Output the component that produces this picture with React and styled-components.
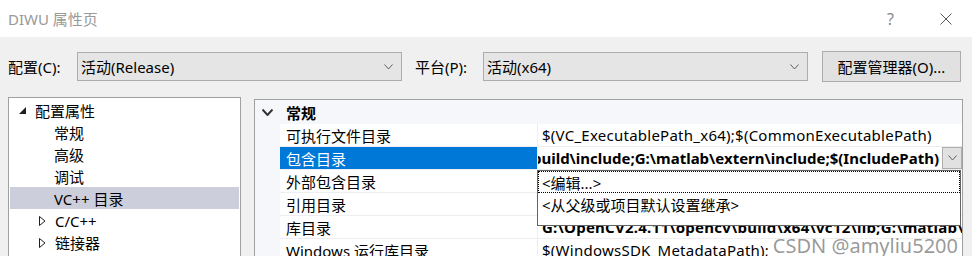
import styled, { createGlobalStyle } from 'styled-components';

const GlobalStyle = createGlobalStyle`
  html, body {
    margin: 0;
    padding: 0;
    background: #f0f0f0;
  }
  body {
    font-family: 'Noto Sans', 'Noto Sans CJK SC', sans-serif;
    font-size: 15px;
    color: #000;
  }
`;

const Window = styled.div`
  width: 972px;
  height: 256px;
  overflow: hidden;
  display: flex;
  flex-direction: column;
  background: #f0f0f0;
`;

const TitleBar = styled.div`
  height: 37px;
  flex: none;
  background: #fff;
  display: flex;
  align-items: center;
  padding-left: 8px;
  color: #999;
`;

const Title = styled.div`
  flex: 1;
`;

const Help = styled.div`
  width: 20px;
  margin-right: 33px;
  color: #8a8a8a;
  font-size: 16px;
`;

const CloseBtn = styled.div`
  width: 12px;
  margin-right: 20px;
  display: flex;
`;

const Body = styled.div`
  flex: 1;
  padding: 14px 0 0 8px;
  display: flex;
  flex-direction: column;
`;

const ConfigRow = styled.div`
  display: flex;
  align-items: center;
  height: 31px;
`;

const Label = styled.div`
  width: ${(p) => p.$w}px;
  margin-left: ${(p) => p.$ml || 0}px;
  flex: none;
`;

const Combo = styled.div`
  width: 325px;
  height: 29px;
  box-sizing: border-box;
  border: 1px solid #adadad;
  background: #e5e5e5;
  display: flex;
  align-items: center;
  padding: 0 8px 0 3px;
`;

const ComboText = styled.div`
  flex: 1;
`;

const Button = styled.div`
  margin-left: 14px;
  width: 139px;
  height: 31px;
  box-sizing: border-box;
  border: 1px solid #adadad;
  background: #e1e1e1;
  display: flex;
  align-items: center;
  justify-content: center;
`;

const Main = styled.div`
  display: flex;
  margin-top: 15px;
  flex: 1;
`;

const Tree = styled.div`
  width: 233px;
  box-sizing: border-box;
  border: 1px solid #a0a0a0;
  border-bottom: none;
  background: #fff;
  padding: 1px 1px 0;
`;

const TreeRow = styled.div`
  height: 22px;
  display: flex;
  align-items: center;
  padding-top: 1px;
  box-sizing: border-box;
  padding-left: ${(p) => p.$indent}px;
  background: ${(p) => (p.$selected ? '#cccedb' : 'transparent')};
`;

const TreeIcon = styled.span`
  display: flex;
  width: 7px;
  margin-right: 9px;
`;

const Grid = styled.div`
  position: relative;
  margin: 2px 0 0 13px;
  width: 709px;
  box-sizing: border-box;
  border: 1px solid #a0a0a0;
  border-bottom: none;
  background: #fff;
`;

const Category = styled.div`
  height: 24px;
  display: flex;
  align-items: center;
  background: #f5f7fa;
  font-weight: 700;
`;

const CatChevron = styled.span`
  display: flex;
  width: 25px;
  padding-left: 7px;
  box-sizing: border-box;
`;

const CatName = styled.span`
  padding-left: 6px;
`;

const PropRow = styled.div`
  display: grid;
  grid-template-columns: 25px 258px 1fr;
  height: 23px;
`;

const Gutter = styled.div`
  background: #f5f7fa;
`;

const NameCell = styled.div`
  display: flex;
  align-items: center;
  padding-left: 6px;
  border-bottom: 1px solid #eceef2;
  border-right: 1px solid #eceef2;
  background: ${(p) => (p.$selected ? '#0078d7' : '#fff')};
  color: ${(p) => (p.$selected ? '#fff' : '#000')};
  white-space: nowrap;
`;

const ValueCell = styled.div`
  display: flex;
  align-items: center;
  padding-left: 4px;
  border-bottom: 1px solid #eceef2;
  font-weight: ${(p) => (p.$bold ? 700 : 400)};
  letter-spacing: 0.25px;
  white-space: nowrap;
  overflow: hidden;
`;

const EditCell = styled.div`
  display: flex;
  align-items: center;
  overflow: hidden;
  border-bottom: 1px solid #eceef2;
`;

const EditText = styled.div`
  flex: 1;
  display: flex;
  justify-content: flex-end;
  overflow: hidden;
  white-space: nowrap;
  font-weight: 700;
  padding-right: 3px;
`;

const DropBtn = styled.div`
  width: 20px;
  height: 22px;
  box-sizing: border-box;
  border: 1px solid #adadad;
  background: #e1e1e1;
  display: flex;
  align-items: center;
  justify-content: center;
  flex: none;
`;

const Popup = styled.div`
  position: absolute;
  left: 282px;
  top: 70px;
  width: 424px;
  height: 56px;
  box-sizing: border-box;
  border: 1px solid #646464;
  background: #fff;
`;

const PopupItem = styled.div`
  height: 22px;
  display: flex;
  align-items: center;
  padding-left: 3px;
  box-sizing: border-box;
  border: 1px dotted ${(p) => (p.$focus ? '#000' : 'transparent')};
`;

const Watermark = styled.div`
  position: absolute;
  right: 4px;
  bottom: 3px;
  font-size: 20px;
  color: rgba(120, 120, 120, 0.75);
  pointer-events: none;
`;

const Chevron = ({ w = 9, h = 5, stroke = '#606060', sw = 1 }) => (
  <svg width={w} height={h + 1} viewBox={`0 0 ${w} ${h + 1}`}>
    <polyline points={`0.5,0.5 ${w / 2},${h} ${w - 0.5},0.5`} fill="none" stroke={stroke} strokeWidth={sw} />
  </svg>
);

const Expanded = () => (
  <svg width="7" height="7" viewBox="0 0 7 7">
    <polygon points="7,0 7,7 0,7" fill="#1e1e1e" />
  </svg>
);

const Collapsed = () => (
  <svg width="7" height="10" viewBox="0 0 7 10">
    <polygon points="0.5,0.5 6,5 0.5,9.5" fill="none" stroke="#1e1e1e" strokeWidth="1" />
  </svg>
);

const treeItems = [
  { label: '配置属性', indent: 9, icon: 'open' },
  { label: '常规', indent: 44 },
  { label: '高级', indent: 44 },
  { label: '调试', indent: 44 },
  { label: 'VC++ 目录', indent: 44, selected: true },
  { label: 'C/C++', indent: 29, icon: 'closed' },
  { label: '链接器', indent: 29, icon: 'closed' },
];

const props = [
  { name: '可执行文件目录', value: '$(VC_ExecutablePath_x64);$(CommonExecutablePath)' },
  { name: '包含目录', edit: 'G:\\OpenCV2.4.11\\opencv\\build\\include;G:\\matlab\\extern\\include;$(IncludePath)', selected: true },
  { name: '外部包含目录', value: '$(VC_IncludePath);$(WindowsSDK_IncludePath);' },
  { name: '引用目录', value: '$(VC_ReferencesPath_x64);' },
  { name: '库目录', value: 'G:\\OpenCV2.4.11\\opencv\\build\\x64\\vc12\\lib;G:\\matlab\\extern\\lib', bold: true },
  { name: 'Windows 运行库目录', value: '$(WindowsSDK_MetadataPath);' },
];

export default function App() {
  return (
    <Window>
      <GlobalStyle />
      <TitleBar>
        <Title>DIWU 属性页</Title>
        <Help>?</Help>
        <CloseBtn>
          <svg width="12" height="12" viewBox="0 0 12 12">
            <path d="M0.5 0.5 L11.5 11.5 M11.5 0.5 L0.5 11.5" stroke="#555" strokeWidth="1" />
          </svg>
        </CloseBtn>
      </TitleBar>
      <Body>
        <ConfigRow>
          <Label $w={69}>配置(C):</Label>
          <Combo>
            <ComboText>活动(Release)</ComboText>
            <Chevron />
          </Combo>
          <Label $w={68} $ml={13}>平台(P):</Label>
          <Combo>
            <ComboText>活动(x64)</ComboText>
            <Chevron />
          </Combo>
          <Button>配置管理器(O)...</Button>
        </ConfigRow>
        <Main>
          <Tree>
            {treeItems.map((t) => (
              <TreeRow key={t.label} $indent={t.indent} $selected={t.selected}>
                {t.icon && (
                  <TreeIcon>{t.icon === 'open' ? <Expanded /> : <Collapsed />}</TreeIcon>
                )}
                {t.label}
              </TreeRow>
            ))}
          </Tree>
          <Grid>
            <Category>
              <CatChevron>
                <Chevron w={11} h={6} stroke="#333" sw={2} />
              </CatChevron>
              <CatName>常规</CatName>
            </Category>
            {props.map((p) => (
              <PropRow key={p.name}>
                <Gutter />
                <NameCell $selected={p.selected}>{p.name}</NameCell>
                {p.edit ? (
                  <EditCell>
                    <EditText>
                      <span>{p.edit}</span>
                    </EditText>
                    <DropBtn>
                      <Chevron />
                    </DropBtn>
                  </EditCell>
                ) : (
                  <ValueCell $bold={p.bold}>{p.value}</ValueCell>
                )}
              </PropRow>
            ))}
            <Popup>
              <PopupItem $focus>&lt;编辑...&gt;</PopupItem>
              <PopupItem>&lt;从父级或项目默认设置继承&gt;</PopupItem>
            </Popup>
            <Watermark>CSDN @amyliu5200</Watermark>
          </Grid>
        </Main>
      </Body>
    </Window>
  );
}
